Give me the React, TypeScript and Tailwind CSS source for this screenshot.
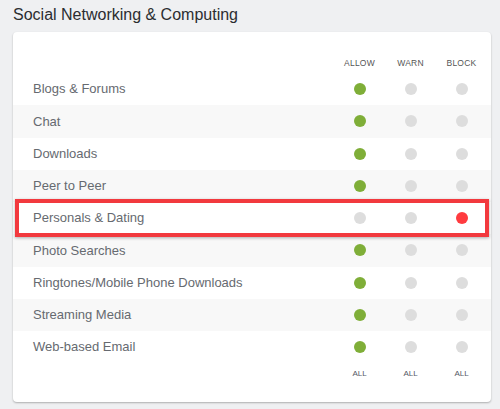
import React from "react";

type Level = "allow" | "warn" | "block";

const categories: { name: string; level: Level }[] = [
  { name: "Blogs & Forums", level: "allow" },
  { name: "Chat", level: "allow" },
  { name: "Downloads", level: "allow" },
  { name: "Peer to Peer", level: "allow" },
  { name: "Personals & Dating", level: "block" },
  { name: "Photo Searches", level: "allow" },
  { name: "Ringtones/Mobile Phone Downloads", level: "allow" },
  { name: "Streaming Media", level: "allow" },
  { name: "Web-based Email", level: "allow" },
];

const levels: Level[] = ["allow", "warn", "block"];

function Dot({ on, level }: { on: boolean; level: Level }) {
  const color = !on ? "bg-[#dddddd]" : level === "block" ? "bg-[#ff3b3f]" : level === "warn" ? "bg-[#f5b700]" : "bg-[#7fae38]";
  return <span className={`block h-3 w-3 rounded-full ${color}`} />;
}

export default function App() {
  return (
    <div className="min-h-[409px] w-[500px] bg-[#eff0f2] pt-[4px] pl-[13px] pr-[9px] pb-2 font-['Liberation_Sans',Arial,sans-serif]">
      <h2 className="text-[16px] leading-[22px] text-[#2b2d30]">Social Networking &amp; Computing</h2>
      <div className="mt-[6px] h-[370px] rounded-[4px] bg-white pt-[24px] shadow-[0_1px_2px_rgba(0,0,0,0.28)]">
        <div className="mb-[2px] flex h-[15px] items-center pr-[4px]">
          <div className="flex-1" />
          {["ALLOW", "WARN", "BLOCK"].map((h) => (
            <div key={h} className="w-[51px] text-center text-[8.5px] tracking-[0.2px] text-[#555]">{h}</div>
          ))}
        </div>
        <div className="relative">
          {categories.map((c, i) => (
            <div key={c.name} className={`relative flex h-[32.25px] items-center pr-[4px] ${i % 2 === 1 ? "bg-[#f8f8f8]" : "bg-white"}`}>
              <div className="flex-1 pl-[20px] text-[13px] text-[#666a70]">{c.name}</div>
              {levels.map((l) => (
                <div key={l} className="flex w-[51px] justify-center">
                  <Dot on={c.level === l} level={l} />
                </div>
              ))}
              {c.name === "Personals & Dating" && (
                <div className="pointer-events-none absolute -top-[3px] -bottom-[3px] left-[2px] right-[2px] z-10 border-[4px] border-[#f2393e] shadow-[0_1px_3px_rgba(0,0,0,0.3)]" />
              )}
            </div>
          ))}
        </div>
        <div className="flex h-[22px] items-center pr-[4px]">
          <div className="flex-1" />
          {["ALL", "ALL", "ALL"].map((h, i) => (
            <div key={i} className="w-[51px] text-center text-[8px] text-[#555a66]">{h}</div>
          ))}
        </div>
      </div>
    </div>
  );
}
